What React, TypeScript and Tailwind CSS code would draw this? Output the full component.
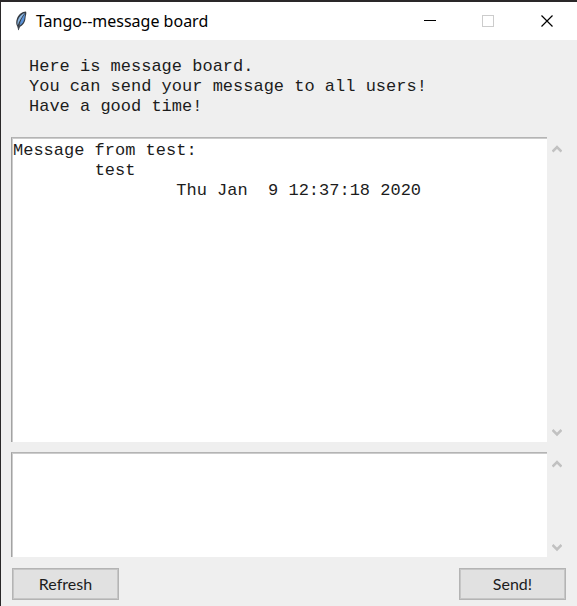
import { useState } from "react";

const history = "Message from test:\n\ttest\n\t\tThu Jan  9 12:37:18 2020";

function FeatherIcon() {
  return (
    <svg width="14" height="20" viewBox="0 0 14 20" aria-hidden="true">
      <path d="M12 0.500C8 0.500 4.500 3.500 3 7.500C1.800 10.500 2 13.500 3.300 15.500L4.400 19.500L5.800 16C9 14.500 11.300 11 11.500 7C11.600 4.500 13 2.500 12 0.500Z" fill="#343a42" />
      <path d="M11 1.800C7.500 3 4.800 6 3.800 9.500C3.300 11.500 3.300 13 3.800 14.200C5 10.500 7.500 6 11 1.800Z" fill="#8fb9e3" />
      <path d="M11.200 2.600C8.500 6 6.300 10 5.400 14.800C8.300 13.300 10.400 10 10.600 6.500Z" fill="#5a92d8" />
      <path d="M5.800 12L4.400 19" fill="none" stroke="#4a525c" strokeWidth="1" />
    </svg>
  );
}

function Chevron({ down = false }: { down?: boolean }) {
  return (
    <svg width="10" height="9" viewBox="0 0 10 9" aria-hidden="true">
      <path d={down ? "M0.500 2L5 6.500L9.500 2" : "M0.500 7.500L5 3L9.500 7.500"} fill="none" stroke="#c1c1c1" strokeWidth="2.600" />
    </svg>
  );
}

function ScrollBar({ name }: { name: string }) {
  return (
    <div className="flex w-[19px] shrink-0 flex-col items-center justify-between pt-[7px] pb-[5px]">
      <button type="button" disabled aria-label={`Scroll ${name} up`}>
        <Chevron />
      </button>
      <button type="button" disabled aria-label={`Scroll ${name} down`}>
        <Chevron down />
      </button>
    </div>
  );
}

const boxClass =
  "block min-w-0 flex-1 resize-none overflow-hidden border-t border-l border-t-[#b4b4b4] border-l-[#a3a3a3] bg-white pt-[3px] pl-px font-['Liberation_Mono',monospace] text-[17px] leading-5 text-[#1c1c1c] shadow-[inset_1px_1px_0_#cccccc] outline-none [tab-size:8]";

const buttonClass =
  "h-8 w-[107px] border border-[#b4b4b4] bg-[#e1e1e1] font-[Lato,sans-serif] text-base leading-5 text-[#1c1c1c] shadow-[inset_0_0_0_1px_#c6c6c6]";

export default function App() {
  const [message, setMessage] = useState("");

  return (
    <div className="flex min-h-screen flex-col border-t-2 border-l border-[#2a2829] bg-[#efefef]">
      <header className="flex h-[38px] shrink-0 items-center bg-white pl-[13px]">
        <FeatherIcon />
        <h1 className="ml-2 flex-1 font-['Noto_Sans',sans-serif] text-base leading-5 text-black">Tango--message board</h1>
        <button type="button" aria-label="Minimize" className="flex h-full w-[58px] items-center justify-center">
          <svg width="12" height="12" viewBox="0 0 12 12" aria-hidden="true">
            <path d="M0 5.500H12" stroke="#000" />
          </svg>
        </button>
        <button type="button" disabled aria-label="Maximize" className="flex h-full w-[58px] items-center justify-center">
          <svg width="12" height="12" viewBox="0 0 12 12" aria-hidden="true">
            <rect x="0.500" y="0.500" width="11" height="11" fill="none" stroke="#cccccc" />
          </svg>
        </button>
        <button type="button" aria-label="Close" className="flex h-full w-[60px] items-center justify-center">
          <svg width="12" height="12" viewBox="0 0 12 12" aria-hidden="true">
            <path d="M0.500 0.500L11.500 11.500M11.500 0.500L0.500 11.500" stroke="#000" strokeWidth="1.200" />
          </svg>
        </button>
      </header>

      <main className="flex flex-1 flex-col pt-[17px] pr-[11px] pb-[6px] pl-[10px]">
        <p className="mb-5 pl-[18px] font-['Liberation_Mono',monospace] text-[17px] leading-5 text-[#1c1c1c]">
          Here is message board.
          <br />
          You can send your message to all users!
          <br />
          Have a good time!
        </p>

        <div className="flex flex-1">
          <textarea readOnly aria-label="Messages" value={history} className={boxClass} />
          <ScrollBar name="messages" />
        </div>

        <div className="mt-[10px] flex h-[105px]">
          <textarea
            aria-label="Your message"
            value={message}
            onChange={(event) => setMessage(event.target.value)}
            className={boxClass}
          />
          <ScrollBar name="your message" />
        </div>

        <div className="mt-[11px] flex justify-between pl-px">
          <button type="button" className={buttonClass}>
            Refresh
          </button>
          <button type="button" className={buttonClass} onClick={() => setMessage("")}>
            Send!
          </button>
        </div>
      </main>
    </div>
  );
}
